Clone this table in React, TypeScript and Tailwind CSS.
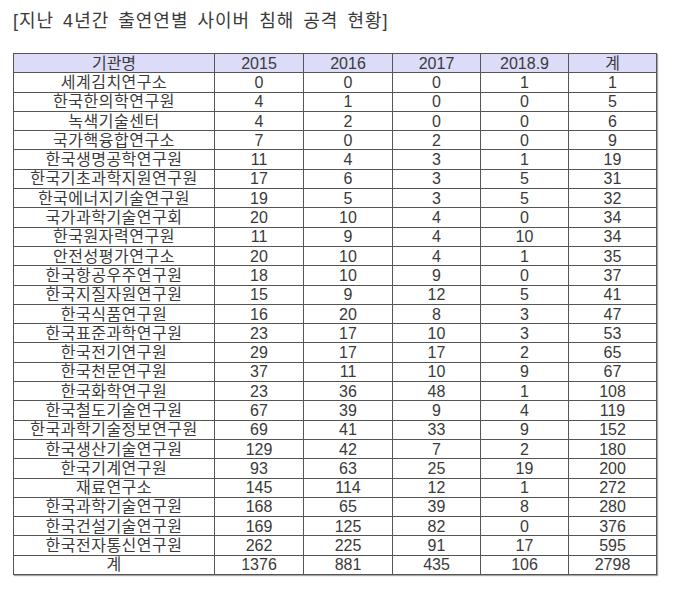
import React from 'react';

const rows: [string, number, number, number, number, number][] = [
  ['세계김치연구소', 0, 0, 0, 1, 1],
  ['한국한의학연구원', 4, 1, 0, 0, 5],
  ['녹색기술센터', 4, 2, 0, 0, 6],
  ['국가핵융합연구소', 7, 0, 2, 0, 9],
  ['한국생명공학연구원', 11, 4, 3, 1, 19],
  ['한국기초과학지원연구원', 17, 6, 3, 5, 31],
  ['한국에너지기술연구원', 19, 5, 3, 5, 32],
  ['국가과학기술연구회', 20, 10, 4, 0, 34],
  ['한국원자력연구원', 11, 9, 4, 10, 34],
  ['안전성평가연구소', 20, 10, 4, 1, 35],
  ['한국항공우주연구원', 18, 10, 9, 0, 37],
  ['한국지질자원연구원', 15, 9, 12, 5, 41],
  ['한국식품연구원', 16, 20, 8, 3, 47],
  ['한국표준과학연구원', 23, 17, 10, 3, 53],
  ['한국전기연구원', 29, 17, 17, 2, 65],
  ['한국천문연구원', 37, 11, 10, 9, 67],
  ['한국화학연구원', 23, 36, 48, 1, 108],
  ['한국철도기술연구원', 67, 39, 9, 4, 119],
  ['한국과학기술정보연구원', 69, 41, 33, 9, 152],
  ['한국생산기술연구원', 129, 42, 7, 2, 180],
  ['한국기계연구원', 93, 63, 25, 19, 200],
  ['재료연구소', 145, 114, 12, 1, 272],
  ['한국과학기술연구원', 168, 65, 39, 8, 280],
  ['한국건설기술연구원', 169, 125, 82, 0, 376],
  ['한국전자통신연구원', 262, 225, 91, 17, 595],
  ['계', 1376, 881, 435, 106, 2798],
];

const headers = ['기관명', '2015', '2016', '2017', '2018.9', '계'];
const widths = ['w-[201px]', 'w-[89px]', 'w-[89px]', 'w-[88px]', 'w-[88px]', 'w-[88px]'];

// 표 셀 공통 스타일
const cell = 'border border-[#555] h-[19.3px] p-0 text-center leading-[17px]';

export default function App() {
  return (
    <div
      className="w-[680px] h-[597px] bg-white text-[#3a3a3a]"
      style={{ fontFamily: '"Liberation Sans", "Noto Sans CJK KR", sans-serif' }}
    >
      <div className="pt-[10px] pl-[13px] text-[18px] leading-[22px] tracking-[1px] [word-spacing:3px]">
        [지난 4년간 출연연별 사이버 침해 공격 현황]
      </div>
      <div className="pt-[21px] pl-[13px]">
        <table className="border-collapse table-fixed w-[643px] border border-[#333] text-[16px] shadow-[1px_1px_1px_rgba(0,0,0,0.35)]">
          <thead>
            <tr>
              {headers.map((h, i) => (
                <th key={h + i} className={`${cell} ${widths[i]} font-normal bg-[#dcdcf8]`}>
                  {h}
                </th>
              ))}
            </tr>
          </thead>
          <tbody>
            {rows.map((r) => (
              <tr key={r[0]}>
                <td className={`${cell} tracking-[0.5px]`}>{r[0]}</td>
                {r.slice(1).map((v, j) => (
                  <td key={j} className={cell}>
                    {v}
                  </td>
                ))}
              </tr>
            ))}
          </tbody>
        </table>
      </div>
    </div>
  );
}
